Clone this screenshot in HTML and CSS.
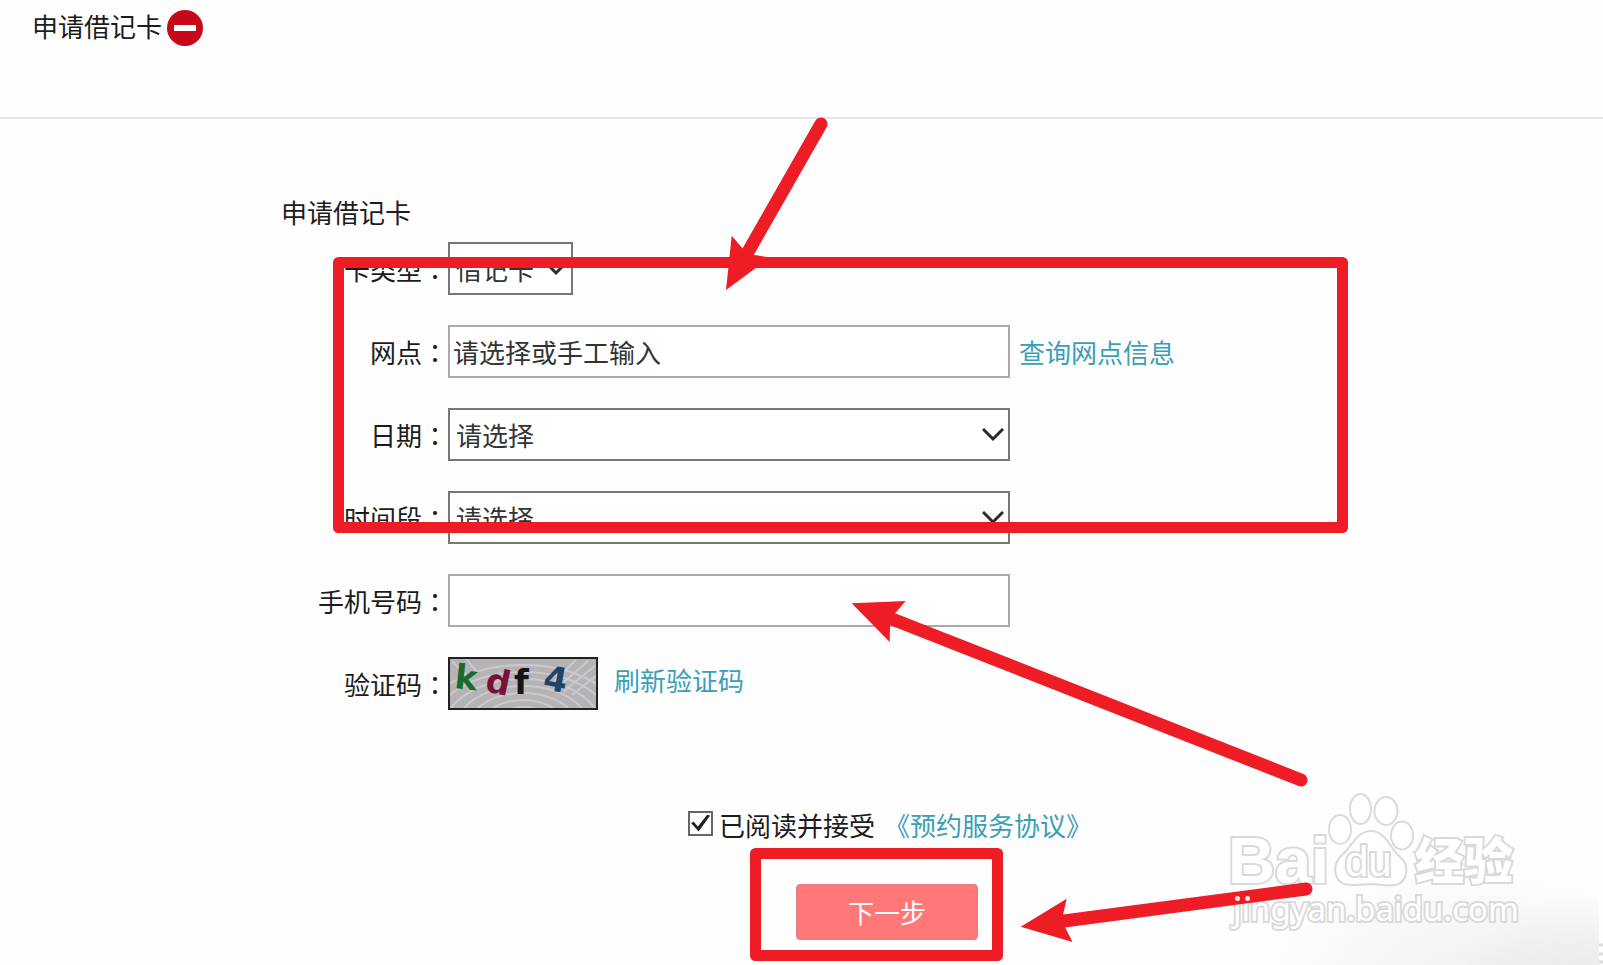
FILE: index.html
```html
<!DOCTYPE html>
<html lang="zh-CN">
<head>
<meta charset="utf-8">
<title>申请借记卡</title>
<link rel="stylesheet" href="styles.css">
</head>
<body>
<div class="page">
  <header class="header">
    <h1 class="header-title">申请借记卡</h1>
    <svg class="minus-icon" viewBox="0 0 36 36" aria-hidden="true"><circle cx="18" cy="18" r="18" fill="#c7081b"/><rect x="7" y="15" width="22" height="6" fill="#fff"/></svg>
  </header>
  <main class="main">
    <form class="form">
      <h2 class="form-title">申请借记卡</h2>
      <div class="rows">
        <div class="row">
          <label class="label" for="card">卡类型<span class="colon" lang="zh-TW">：</span></label>
          <div class="picker picker-small"><select class="field" id="card"><option>借记卡</option></select><svg class="chevron" viewBox="0 0 22 14" aria-hidden="true"><path d="M1 1L11 11L21 1"/></svg></div>
        </div>
        <div class="row">
          <label class="label" for="branch">网点<span class="colon" lang="zh-TW">：</span></label>
          <input class="field field-text" id="branch" type="text" value="请选择或手工输入">
          <a class="link" href="#">查询网点信息</a>
        </div>
        <div class="row">
          <label class="label" for="date">日期<span class="colon" lang="zh-TW">：</span></label>
          <div class="picker"><select class="field" id="date"><option>请选择</option></select><svg class="chevron" viewBox="0 0 22 14" aria-hidden="true"><path d="M1 1L11 11L21 1"/></svg></div>
        </div>
        <div class="row">
          <label class="label" for="time">时间段<span class="colon" lang="zh-TW">：</span></label>
          <div class="picker"><select class="field" id="time"><option>请选择</option></select><svg class="chevron" viewBox="0 0 22 14" aria-hidden="true"><path d="M1 1L11 11L21 1"/></svg></div>
        </div>
        <div class="row">
          <label class="label" for="phone">手机号码<span class="colon" lang="zh-TW">：</span></label>
          <input class="field field-text" id="phone" type="tel">
        </div>
        <div class="row">
          <span class="label">验证码<span class="colon" lang="zh-TW">：</span></span>
          <svg class="captcha" viewBox="0 0 150 53" role="img" aria-label="kdf4">
            <rect width="150" height="53" fill="#b6b3b6"/>
            <g class="ripples">
              <ellipse cx="75" cy="70" rx="30" ry="20"/><ellipse cx="75" cy="70" rx="42" ry="27"/><ellipse cx="75" cy="70" rx="54" ry="34"/><ellipse cx="75" cy="70" rx="66" ry="41"/><ellipse cx="75" cy="70" rx="78" ry="48"/><ellipse cx="75" cy="70" rx="90" ry="55"/><ellipse cx="75" cy="70" rx="102" ry="62"/>
              <path d="M100 30L128 3M108 32L140 4M116 34L148 8M124 38L149 18M20 20L4 4M30 16L18 2"/>
            </g>
            <rect x="1" y="1" width="148" height="51" fill="none" stroke="#222" stroke-width="2"/>
            <g class="captcha-text">
              <text x="7" y="32" fill="#176b2b" transform="rotate(6 17 20)">k</text>
              <text x="38" y="36" fill="#7a1238" transform="rotate(12 47 26)">d</text>
              <text x="66" y="37" fill="#151515">f</text>
              <text x="96" y="34" fill="#1e4468" transform="rotate(10 107 22)">4</text>
            </g>
          </svg>
          <a class="link link-refresh" href="#">刷新验证码</a>
        </div>
      </div>
      <div class="agree">
        <input class="check" id="agree" type="checkbox" checked>
        <label for="agree">已阅读并接受</label>
        <a class="link link-terms" href="#">《预约服务协议》</a>
      </div>
      <button class="next" type="button">下一步</button>
    </form>
  </main>
  <svg class="marks" viewBox="0 0 1603 965" aria-hidden="true">
    <defs>
      <radialGradient id="shade"><stop offset="0" stop-color="#000" stop-opacity=".05"/><stop offset=".5" stop-color="#000" stop-opacity=".028"/><stop offset="1" stop-color="#000" stop-opacity="0"/></radialGradient>
    </defs>
    <ellipse cx="1480" cy="975" rx="230" ry="110" fill="url(#shade)"/>
    <ellipse cx="1598" cy="975" rx="150" ry="80" fill="url(#shade)"/>
    <rect x="1599" y="895" width="4" height="70" fill="#fefefe"/>
    <path d="M1599 945h4M1599 954h4M1599 962h4" stroke="#dcdcdc" stroke-width="3"/>
    <g class="red-box">
      <path d="M338.500 262.500H1342.500V527.500H338.500Z"/>
      <path d="M755.500 853.500H997.500V955.500H755.500Z"/>
    </g>
    <g class="watermark">
      <text class="wm-latin" x="1228" y="883">Bai</text>
      <ellipse cx="1340" cy="829.500" rx="11" ry="14.500"/>
      <ellipse cx="1360.500" cy="809" rx="10.500" ry="15"/>
      <ellipse cx="1386" cy="811" rx="11.500" ry="14"/>
      <ellipse cx="1402" cy="835.500" rx="11" ry="14"/>
      <path d="M1371 831C1357 831 1352 846 1343 854C1335 861 1334 868 1336 875C1340 888 1352 885 1371 884C1388 885 1400 889 1405 877C1408 867 1406 862 1398 855C1389 846 1385 831 1371 831Z"/>
      <text class="wm-du" x="1345" y="876">du</text>
      <text class="wm-cjk" x="1415" y="879">经验</text>
      <text class="wm-url" x="1233" y="921">jingyan.baidu.com</text>
    </g>
    <g class="red-line"><path d="M821 124L748 252"/><path d="M1301 780L892 619"/><path d="M1306 889L1064 921"/></g>
    <g fill="#ee1c25">
      <path d="M726 290L731.700 235.700L742.700 248.600L753.300 254.700L770 257.500Z"/>
      <path d="M851.700 603.300L905.700 601L895 613.500L890 625L889.700 642Z"/>
      <path d="M1020.700 926.700L1066.700 898.700L1063 915L1065 927L1072.500 942Z"/>
    </g>
    <g fill="#fff" fill-opacity=".9"><circle cx="1237.500" cy="898.500" r="2.500"/><circle cx="1247.500" cy="898.500" r="2.500"/></g>
  </svg>
</div>
</body>
</html>
```
FILE: styles.css
```css
* { box-sizing: border-box; }
body {
  margin: 0;
  background: #fefefe;
  color: #1c1c1c;
  font-family: "Noto Sans CJK SC", sans-serif;
  font-size: 26px;
  line-height: 38px;
}
.page { position: relative; min-height: 965px; overflow: hidden; }
.header {
  display: flex;
  align-items: flex-start;
  gap: 5px;
  height: 119px;
  padding: 7px 32px;
  border-bottom: 2px solid #e6e6e6;
}
.header-title, .form-title { margin: 0; font-size: 26px; font-weight: 400; }
.minus-icon { width: 36px; height: 36px; margin-top: 3px; }
.main { padding: 74px 0 0 281px; }
.form-title { margin-bottom: 11px; }
.rows { display: flex; flex-direction: column; gap: 30px; }
.row { display: flex; align-items: center; height: 53px; }
.label { width: 167px; text-align: right; white-space: nowrap; }
.colon { font-family: "Noto Sans CJK TC", sans-serif; }
.picker { position: relative; width: 562px; }
.picker-small { width: 125px; }
.field {
  display: block;
  width: 100%;
  height: 53px;
  margin: 0;
  padding: 0 6px;
  border: 2px solid #777;
  border-radius: 0;
  background: #fff;
  color: #333;
  font: inherit;
  appearance: none;
}
.field-text { width: 562px; padding: 0 3px; border-color: #aaa; }
.chevron {
  position: absolute;
  right: 6px;
  top: 20px;
  width: 22px;
  height: 14px;
  fill: none;
  stroke: #2b2b2b;
  stroke-width: 3;
  pointer-events: none;
}
.link { margin-left: 9px; color: #3a9fb9; text-decoration: none; white-space: nowrap; }
.link-refresh { margin: 0 0 8px 16px; }
.captcha { width: 150px; height: 53px; }
.ripples { fill: none; stroke: #cbc9cb; stroke-width: 2; }
.captcha-text { font-family: "DejaVu Sans", sans-serif; font-size: 34px; font-weight: 700; }
.agree { display: flex; align-items: center; margin: 96px 0 0 407px; }
.check {
  appearance: none;
  width: 25px;
  height: 25px;
  margin: 0 6px 4px 0;
  border: 2px solid #666;
  background: #fff;
  display: grid;
  place-items: center;
}
.check:checked::before {
  content: "";
  width: 19px;
  height: 17px;
  background: #222;
  clip-path: polygon(0 50%, 14% 42%, 36% 70%, 86% 0, 100% 8%, 40% 100%);
}
.link-terms { margin-left: 9px; }
.next {
  display: block;
  width: 182px;
  height: 56px;
  margin: 40px 0 0 515px;
  padding: 0;
  border: 1px solid #dc8088;
  border-radius: 4px;
  background: #ff7777;
  color: #fff;
  font: inherit;
}
.marks {
  position: absolute;
  top: 0;
  left: 0;
  width: 1603px;
  height: 965px;
  pointer-events: none;
}
.red-box { fill: none; stroke: #ee1c25; stroke-width: 11; stroke-linejoin: round; }
.red-line { fill: none; stroke: #ee1c25; stroke-width: 13; stroke-linecap: round; }
.watermark { fill: #fff; stroke: #dadada; stroke-width: 2; }
.watermark text { paint-order: stroke; stroke-width: 4; }
.wm-latin { font: 700 65px "Liberation Sans", sans-serif; }
.wm-du { font: 400 42px "Liberation Sans", sans-serif; }
.wm-cjk { font: 900 49px "Noto Sans CJK SC", sans-serif; }
.wm-url { font: 400 33px "Noto Sans", sans-serif; }
```
